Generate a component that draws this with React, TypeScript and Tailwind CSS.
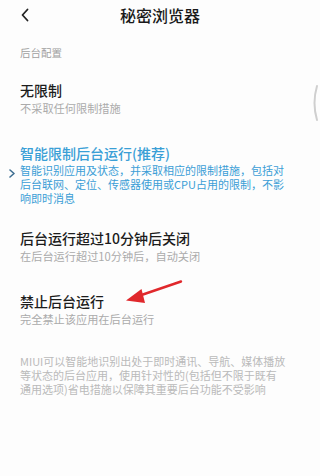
const font = { fontFamily: '"Noto Sans CJK SC", "Noto Sans", sans-serif' };

function Option({ title, sub }: { title: string; sub: string }) {
  return (
    <div className="pl-5">
      <p className="text-[14px] leading-[18px] font-medium text-[#1c1c1c]">{title}</p>
      <p className="mt-[2px] text-[11.2px] leading-[14px] text-[#ababab]">{sub}</p>
    </div>
  );
}

export default function App() {
  return (
    <div
      className="relative w-[320px] h-[476px] overflow-hidden bg-[#fdfdfd] flex flex-col"
      style={font}
    >
      {/* header */}
      <div className="relative h-[30px] flex items-center justify-center">
        <svg
          className="absolute left-[20px] top-[8px]"
          width="10"
          height="14"
          viewBox="0 0 10 14"
          fill="none"
        >
          <path d="M7.5 1.5 L2.5 7 L7.5 12.5" stroke="#222" strokeWidth="1.8" strokeLinecap="round" strokeLinejoin="round" />
        </svg>
        <h1 className="text-[16px] leading-[30px] font-medium text-[#1a1a1a]">秘密浏览器</h1>
      </div>

      <p className="mt-[16px] pl-5 text-[10.5px] leading-[14px] text-[#a0a0a0]">后台配置</p>

      <div className="mt-[21px]">
        <Option title="无限制" sub="不采取任何限制措施" />
      </div>

      {/* recommended, selected */}
      <div className="relative mt-[29px] pl-5">
        <svg
          className="absolute left-[8px] top-[25px]"
          width="8"
          height="9"
          viewBox="0 0 8 9"
          fill="none"
        >
          <path d="M2 1 L6 4.5 L2 8" stroke="#3f6f92" strokeWidth="1.6" strokeLinecap="round" strokeLinejoin="round" />
        </svg>
        <p className="text-[14px] leading-[18px] font-medium text-[#3a9fd6]">智能限制后台运行(推荐)</p>
        <div className="mt-[1px] text-[11px] leading-[14px] text-[#3b9ed6] whitespace-nowrap">
          <p>智能识别应用及状态，并采取相应的限制措施，包括对</p>
          <p>后台联网、定位、传感器使用或CPU占用的限制，不影</p>
          <p>响即时消息</p>
        </div>
      </div>

      <div className="mt-[24px]">
        <Option title="后台运行超过10分钟后关闭" sub="在后台运行超过10分钟后，自动关闭" />
      </div>

      <div className="mt-[29px]">
        <Option title="禁止后台运行" sub="完全禁止该应用在后台运行" />
      </div>

      <div className="mt-[28px] pl-5 text-[11px] leading-[14px] text-[#bababa] whitespace-nowrap">
        <p>MIUI可以智能地识别出处于即时通讯、导航、媒体播放</p>
        <p>等状态的后台应用，使用针对性的(包括但不限于既有</p>
        <p>通用选项)省电措施以保障其重要后台功能不受影响</p>
      </div>

      {/* red annotation arrow */}
      <svg className="absolute left-0 top-0" width="320" height="476" viewBox="0 0 320 476" fill="none">
        <line x1="181" y1="281.5" x2="140" y2="295.5" stroke="#e0282c" strokeWidth="2.4" strokeLinecap="round" />
        <path d="M126 300.5 L141.5 289 L145 303 Z" fill="#e0282c" />
      </svg>

      {/* faint scroll edge on the right */}
      <svg className="absolute left-[310px] top-[84px]" width="10" height="38" viewBox="0 0 10 38" fill="none">
        <path d="M7 2 Q2 19 7 36" stroke="#cfcfcf" strokeWidth="2" strokeLinecap="round" />
      </svg>
    </div>
  );
}
